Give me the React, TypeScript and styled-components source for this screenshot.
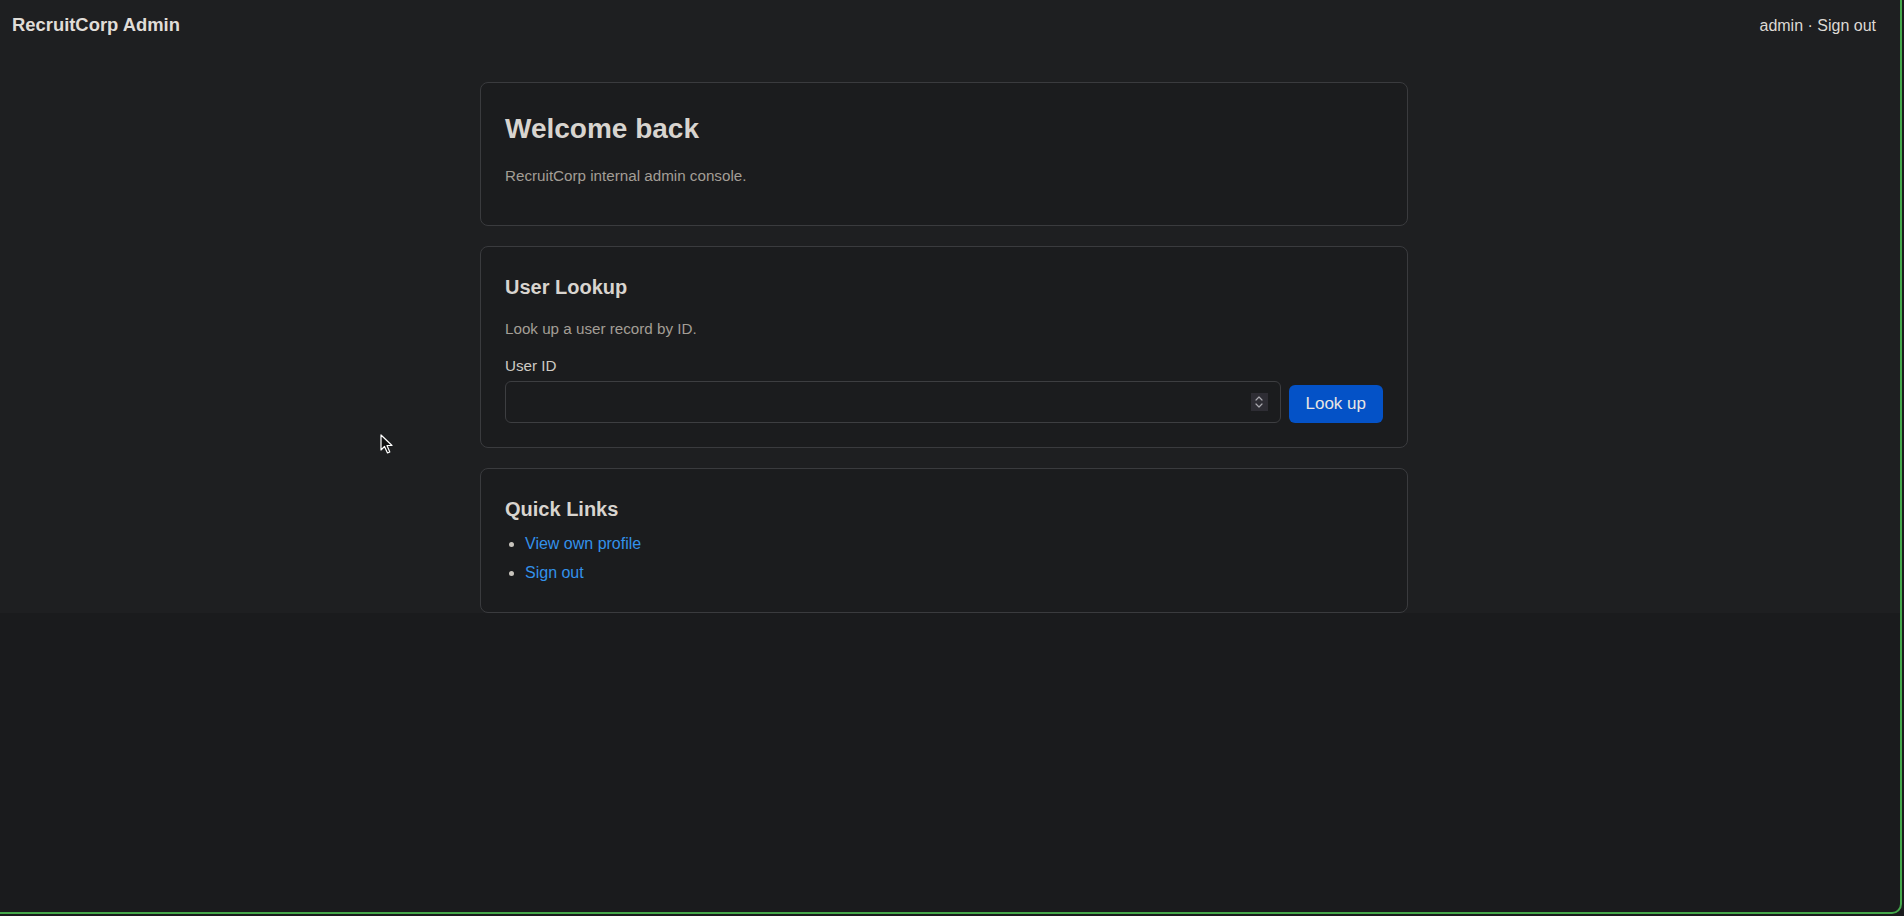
import { createGlobalStyle, styled } from "styled-components";

const GlobalStyle = createGlobalStyle`
  * {
    box-sizing: border-box;
  }
  html,
  body {
    margin: 0;
    padding: 0;
    background-color: #1a1b1d;
    font-family: "Liberation Sans", Arial, sans-serif;
    font-size: 16px;
    line-height: 1.6;
    color: #d8d4cf;
  }
`;

type ILink = {
  label: string;
  href: string;
};

const quickLinks: ILink[] = [
  { label: "View own profile", href: "#profile" },
  { label: "Sign out", href: "#logout" },
];

function App() {
  return (
    <>
      <GlobalStyle />
      <Frame>
        <Top>
          <Shell>
            <Header>
              <Brand>RecruitCorp Admin</Brand>
              <UserNav>
                admin · <NavLink href="#logout">Sign out</NavLink>
              </UserNav>
            </Header>
            <Main>
              <Card>
                <CardTitle size="large">Welcome back</CardTitle>
                <Description>RecruitCorp internal admin console.</Description>
              </Card>

              <Card>
                <CardTitle size="medium">User Lookup</CardTitle>
                <Description>Look up a user record by ID.</Description>
                <Label htmlFor="user-id">User ID</Label>
                <LookupRow>
                  <InputWrap>
                    <IdInput id="user-id" type="text" inputMode="numeric" />
                    <Spinner>
                      <svg width="10" height="14" viewBox="0 0 10 14" fill="none">
                        <path
                          d="M2 5 L5 2 L8 5"
                          stroke="#a9a8ae"
                          strokeWidth="1.2"
                          strokeLinecap="round"
                          strokeLinejoin="round"
                        />
                        <path
                          d="M2 9 L5 12 L8 9"
                          stroke="#a9a8ae"
                          strokeWidth="1.2"
                          strokeLinecap="round"
                          strokeLinejoin="round"
                        />
                      </svg>
                    </Spinner>
                  </InputWrap>
                  <LookupBtn>Look up</LookupBtn>
                </LookupRow>
              </Card>

              <Card>
                <CardTitle size="medium">Quick Links</CardTitle>
                <LinkList>
                  {quickLinks.map((link) => (
                    <LinkItem key={link.label}>
                      <QuickLink href={link.href}>{link.label}</QuickLink>
                    </LinkItem>
                  ))}
                </LinkList>
              </Card>
            </Main>
          </Shell>
        </Top>
      </Frame>
      <Cursor width="13" height="21" viewBox="0 0 13 21">
        <path
          d="M1 1 L1 16 L4.5 12.5 L7.5 19 L9.8 18 L7 11.5 L12 11.5 Z"
          fill="#111"
          stroke="#fff"
          strokeWidth="1.2"
          strokeLinejoin="round"
        />
      </Cursor>
    </>
  );
}

const Frame = styled.div`
  width: 1902px;
  height: 914px;
  border-right: 2px solid #45a84b;
  border-bottom: 2px solid #45a84b;
  border-bottom-right-radius: 10px;
  background-color: #1a1b1d;
  overflow: hidden;
`;

const Top = styled.div`
  width: 100%;
  background-color: #1e1f21;
`;

const Shell = styled.div`
  width: calc(100% - 12px);
`;

const Header = styled.header`
  height: 52px;
  padding: 0 12px;
  display: flex;
  align-items: center;
  justify-content: space-between;
`;

const Brand = styled.div`
  margin-bottom: 2px;
  font-size: 18.4px;
  font-weight: bold;
  color: #e0ddd8;
`;

const UserNav = styled.div`
  font-size: 16px;
  color: #dcd9d4;
`;

const NavLink = styled.a`
  color: inherit;
  text-decoration: none;
`;

const Main = styled.main`
  width: 928px;
  margin: 0 auto;
  padding-top: 30px;
  display: flex;
  flex-direction: column;
  gap: 20px;
`;

const Card = styled.section`
  display: flex;
  flex-direction: column;
  padding: 24px;
  border: 1px solid #3a3b3e;
  border-radius: 8px;
  background-color: #1b1c1e;
`;

const CardTitle = styled.h2<{ size: "large" | "medium" }>`
  margin: 0 0 6px;
  font-size: ${({ size }) => (size === "large" ? "28px" : "20px")};
  line-height: ${({ size }) => (size === "large" ? "43.4px" : "32px")};
  font-weight: bold;
  color: #d8d4cf;
`;

const Description = styled.p`
  margin: 8px 0 13px;
  font-size: 15.2px;
  line-height: 24px;
  color: #a39e96;
`;

const Label = styled.label`
  display: block;
  margin-bottom: 3px;
  font-size: 15.2px;
  line-height: 24px;
  color: #cfcbc4;
`;

const LookupRow = styled.div`
  display: flex;
  align-items: flex-end;
  gap: 8px;
`;

const InputWrap = styled.div`
  position: relative;
  flex: 1;
  display: flex;
`;

const IdInput = styled.input`
  width: 100%;
  height: 42px;
  padding: 0 40px 0 12px;
  border: 1px solid #3d3e41;
  border-radius: 6px;
  background-color: #1b1c1e;
  color: #d8d4cf;
  font-family: inherit;
  font-size: 16px;
  &:focus {
    outline: none;
  }
`;

const Spinner = styled.span`
  position: absolute;
  right: 13px;
  top: 12px;
  width: 17px;
  height: 18px;
  display: flex;
  align-items: center;
  justify-content: center;
  background-color: #2e2d34;
  pointer-events: none;
`;

const LookupBtn = styled.button`
  height: 38px;
  padding: 0 17px;
  border: none;
  border-radius: 6px;
  background-color: #0452c7;
  color: #e8e6e3;
  font-family: inherit;
  font-size: 17px;
  cursor: pointer;
`;

const LinkList = styled.ul`
  margin: 0 0 2px;
  padding-left: 20px;
  color: #c8c4bd;
`;

const LinkItem = styled.li`
  font-size: 16px;
  line-height: 25.6px;
  & + & {
    margin-top: 3px;
  }
`;

const QuickLink = styled.a`
  color: #3391ea;
  text-decoration: none;
`;

const Cursor = styled.svg`
  position: absolute;
  left: 380px;
  top: 434px;
  pointer-events: none;
`;

export default App;
